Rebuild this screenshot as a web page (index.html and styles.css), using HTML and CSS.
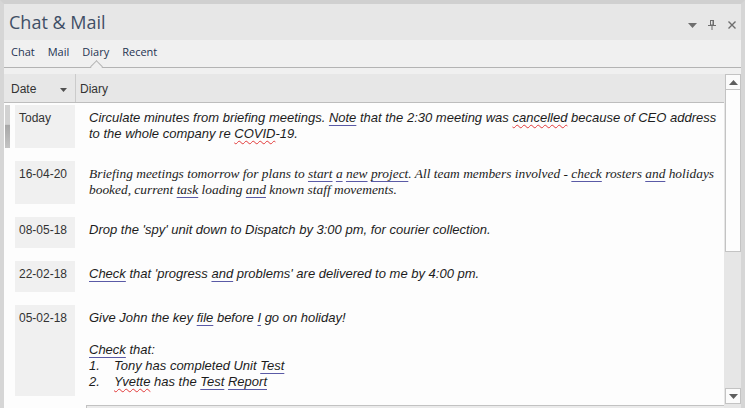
FILE: index.html
```html
<!DOCTYPE html>
<html>
<head>
<meta charset="utf-8">
<link rel="stylesheet" href="styles.css">
</head>
<body>
<div class="window">
  <div class="titlebar">
    <span class="title">Chat &amp; Mail</span>
    <div class="win-icons">
      <svg class="ico-drop" width="9" height="5" viewBox="0 0 9 5"><polygon points="0,0 9,0 4.5,5" fill="#6e6e6e"/></svg>
      <svg class="ico-pin" width="8" height="10" viewBox="0 0 8 10"><rect x="2.5" y="0.5" width="3" height="4.5" fill="none" stroke="#6e6e6e"/><rect x="4.5" y="0.5" width="1" height="4.5" fill="#6e6e6e"/><line x1="0" y1="5.5" x2="8" y2="5.5" stroke="#6e6e6e"/><line x1="4" y1="6" x2="4" y2="10" stroke="#6e6e6e"/></svg>
      <svg class="ico-close" width="8" height="8" viewBox="0 0 8 8"><path d="M0.5 0.5 L7.5 7.5 M7.5 0.5 L0.5 7.5" stroke="#6e6e6e" stroke-width="1.4"/></svg>
    </div>
  </div>
  <div class="tabs">
    <span class="tab">Chat</span>
    <span class="tab">Mail</span>
    <span class="tab active">Diary</span>
    <span class="tab">Recent</span>
  </div>
  <div class="spacer"></div>
  <div class="body">
    <div class="grid">
      <div class="header">
        <div class="h-date"><span>Date</span><svg width="7" height="4" viewBox="0 0 7 4"><polygon points="0,0 7,0 3.5,4" fill="#505050"/></svg></div>
        <div class="h-diary">Diary</div>
      </div>
      <div class="list">
        <div class="row">
          <div class="gutter"><div class="sel"></div></div>
          <div class="date">Today</div>
          <div class="text sans">Circulate minutes from briefing meetings. <u class="b">Note</u> that the 2:30 meeting was <u class="r">cancelled</u> because of CEO address<br>to the whole company re <u class="r">COVID</u>-19.</div>
        </div>
        <div class="row">
          <div class="gutter"></div>
          <div class="date">16-04-20</div>
          <div class="text serif">Briefing meetings tomorrow for plans to <u class="b">start</u> <u class="b">a</u> <u class="b">new</u> <u class="b">project</u>. All team members involved - <u class="b">check</u> rosters <u class="b">and</u> holidays<br>booked, current <u class="b">task</u> loading <u class="b">and</u> known staff movements.</div>
        </div>
        <div class="row">
          <div class="gutter"></div>
          <div class="date">08-05-18</div>
          <div class="text sans">Drop the 'spy' unit down to Dispatch by 3:00 pm, for courier collection.</div>
        </div>
        <div class="row">
          <div class="gutter"></div>
          <div class="date">22-02-18</div>
          <div class="text sans"><u class="b">Check</u> that 'progress <u class="b">and</u> problems' are delivered to me by 4:00 pm.</div>
        </div>
        <div class="row">
          <div class="gutter"></div>
          <div class="date">05-02-18</div>
          <div class="text sans">
            <div>Give John the key <u class="b">file</u> before <u class="b">I</u> go on holiday!</div>
            <div>&nbsp;</div>
            <div><u class="b">Check</u> that:</div>
            <div class="li"><span class="num">1.</span><span>Tony has completed Unit <u class="b">Test</u></span></div>
            <div class="li"><span class="num">2.</span><span><u class="r">Yvette</u> has the <u class="b">Test</u> <u class="b">Report</u></span></div>
          </div>
        </div>
      </div>
      <div class="hbar"><div class="hthumb"></div></div>
    </div>
    <div class="vscroll">
      <div class="sbtn"><svg width="9" height="5" viewBox="0 0 9 5"><polygon points="4.5,0 9,5 0,5" fill="#5e5e5e"/></svg></div>
      <div class="thumb"></div>
      <div class="track"></div>
      <div class="sbtn"><svg width="9" height="5" viewBox="0 0 9 5"><polygon points="0,0 9,0 4.5,5" fill="#5e5e5e"/></svg></div>
    </div>
  </div>
</div>
</body>
</html>
```
FILE: styles.css
```css
html, body {
  margin: 0;
  padding: 0;
}
body {
  width: 745px;
  height: 408px;
  overflow: hidden;
  background: #e6e6e6;
}
.window {
  box-sizing: border-box;
  width: 745px;
  height: 408px;
  border-top: 4px solid #d0d0d0;
  border-left: 4px solid #d6d6d6;
  border-right: 4px solid #d6d6d6;
  display: flex;
  flex-direction: column;
  background: #e7e7e7;
}
.titlebar {
  height: 36px;
  display: flex;
  align-items: center;
  justify-content: space-between;
  background: #e7e7e7;
}
.title {
  font-family: "Open Sans", "Liberation Sans", sans-serif;
  font-size: 18px;
  color: #3f4f66;
  padding-left: 5px;
  margin-top: -1px;
}
.win-icons {
  display: flex;
  align-items: center;
  padding-right: 5px;
  margin-top: 5px;
}
.ico-drop { margin-right: 11px; margin-top: 1px; }
.ico-pin { margin-right: 12px; }
.tabs {
  height: 27px;
  border-bottom: 1px solid #b3b3b3;
  background: #f0f0f0;
  display: flex;
  align-items: center;
  gap: 13px;
  padding-left: 7px;
  font-family: "Open Sans", "Liberation Sans", sans-serif;
  font-size: 11px;
  color: #1e3452;
}
.tab {
  position: relative;
  line-height: 14px;
  margin-top: -4px;
}
.tab.active::after {
  content: "";
  position: absolute;
  left: 50%;
  bottom: -12px;
  width: 8px;
  height: 8px;
  margin-left: -4px;
  background: #f0f0f0;
  border-top: 1px solid #b3b3b3;
  border-left: 1px solid #b3b3b3;
  transform: rotate(45deg);
}
.spacer {
  height: 6px;
  background: #f0f0f0;
}
.body {
  flex: 1;
  display: flex;
  min-height: 0;
}
.grid {
  flex: 1;
  display: flex;
  flex-direction: column;
  background: #fdfdfd;
  min-width: 0;
}
.header {
  box-sizing: border-box;
  height: 29px;
  display: flex;
  align-items: center;
  padding-top: 2px;
  background: #e7e7e7;
  border-bottom: 1px solid #bdbdbd;
  font-family: "Liberation Sans", Arial, sans-serif;
  font-size: 12px;
  color: #333;
}
.h-date {
  box-sizing: border-box;
  width: 72px;
  align-self: stretch;
  margin-top: -2px;
  padding: 2px 8px 0 7px;
  display: flex;
  align-items: center;
  justify-content: space-between;
  border-right: 1px solid #cbcbcb;
}
.h-date svg { margin-top: 1px; }
.h-diary {
  padding-left: 4px;
}
.list {
  flex: 1;
  padding-top: 2px;
  display: flex;
  flex-direction: column;
  gap: 13px;
  overflow: hidden;
}
.row {
  display: flex;
  min-height: 31px;
}
.gutter {
  width: 11px;
  flex: none;
  display: flex;
}
.sel {
  margin-left: 1px;
  width: 5px;
  background: linear-gradient(to bottom, #d2d2d2 0, #d2d2d2 45%, #a8a8a8 47%, #c4c4c4 100%);
}
.date {
  width: 56px;
  flex: none;
  background: #f0f0f0;
  padding: 5px 0 0 4px;
  font-family: "Liberation Sans", Arial, sans-serif;
  font-size: 12px;
  line-height: 16px;
  color: #333;
}
.text {
  padding: 5px 0 6px 14px;
  font-style: italic;
  line-height: 16px;
  color: #1c1c1c;
}
.sans {
  font-family: "Liberation Sans", Arial, sans-serif;
  font-size: 13px;
}
.serif {
  font-family: "Liberation Serif", "Times New Roman", serif;
  font-size: 13.4px;
}
.li {
  display: flex;
}
.num {
  width: 25px;
  flex: none;
}
u {
  text-decoration: none;
}
u.b {
  text-decoration: underline solid #5a5aa6 1px;
  text-underline-offset: 3px;
}
u.r {
  text-decoration: underline wavy #e23a3a 1px;
  text-underline-offset: 2px;
}
.hbar {
  height: 3px;
  background: #fdfdfd;
  padding-left: 82px;
}
.hthumb {
  height: 100%;
  border-top: 1px solid #c2c2c2;
  border-left: 1px solid #c2c2c2;
  background: #ebebeb;
}
.vscroll {
  width: 17px;
  flex: none;
  background: #e6e6e6;
  display: flex;
  flex-direction: column;
  align-items: flex-end;
}
.sbtn {
  box-sizing: border-box;
  width: 16px;
  height: 16px;
  background: #fbfbfb;
  border: 1px solid #c3c3c3;
  display: flex;
  align-items: center;
  justify-content: center;
}
.thumb {
  box-sizing: border-box;
  width: 16px;
  height: 162px;
  background: #fdfdfd;
  border: 1px solid #c3c3c3;
  border-top: none;
}
.track {
  flex: 1;
}
.vscroll .sbtn:last-child {
  margin-bottom: 4px;
}
```
